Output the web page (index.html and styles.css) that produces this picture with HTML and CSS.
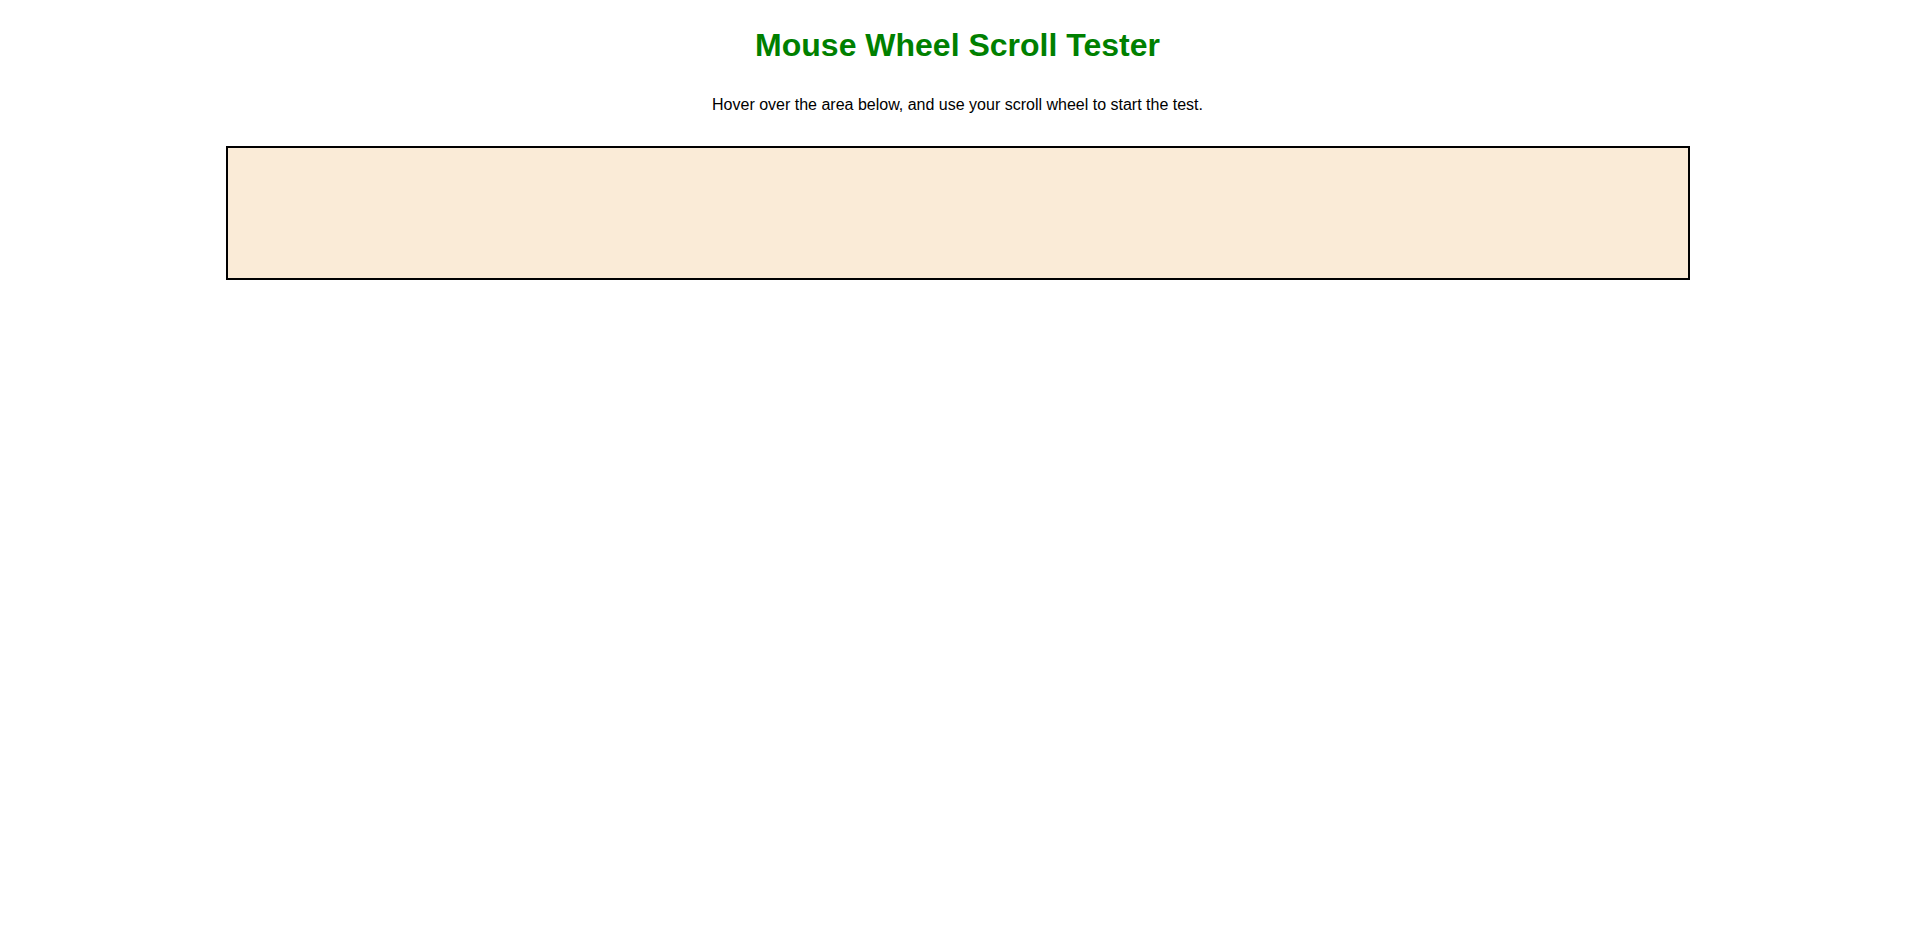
FILE: index.html
```html
<!DOCTYPE html>
<html lang="en">
<head>
<meta charset="utf-8">
<title>Mouse Wheel Scroll Tester</title>
<link rel="stylesheet" href="styles.css">
</head>
<body>
<main class="page">
  <h1 class="title">Mouse Wheel Scroll Tester</h1>
  <p class="hint">Hover over the area below, and use your scroll wheel to start the test.</p>
  <div class="test-area"></div>
</main>
</body>
</html>
```
FILE: styles.css
```css
html, body {
  margin: 0;
  padding: 0;
  background: #ffffff;
}
body {
  font-family: "Liberation Sans", Arial, sans-serif;
  color: #000000;
}
.page {
  display: flex;
  flex-direction: column;
  align-items: center;
  padding-top: 27px;
  padding-left: 2px;
}
.title {
  margin: 0;
  font-size: 32px;
  font-weight: bold;
  color: #008000;
  line-height: 37px;
}
.hint {
  margin: 32px 0 0;
  font-size: 16px;
  line-height: 18px;
}
.test-area {
  margin-top: 32px;
  width: 1460px;
  height: 130px;
  border: 2px solid #000000;
  background: #faebd7;
  margin-left: 1px;
}
```
